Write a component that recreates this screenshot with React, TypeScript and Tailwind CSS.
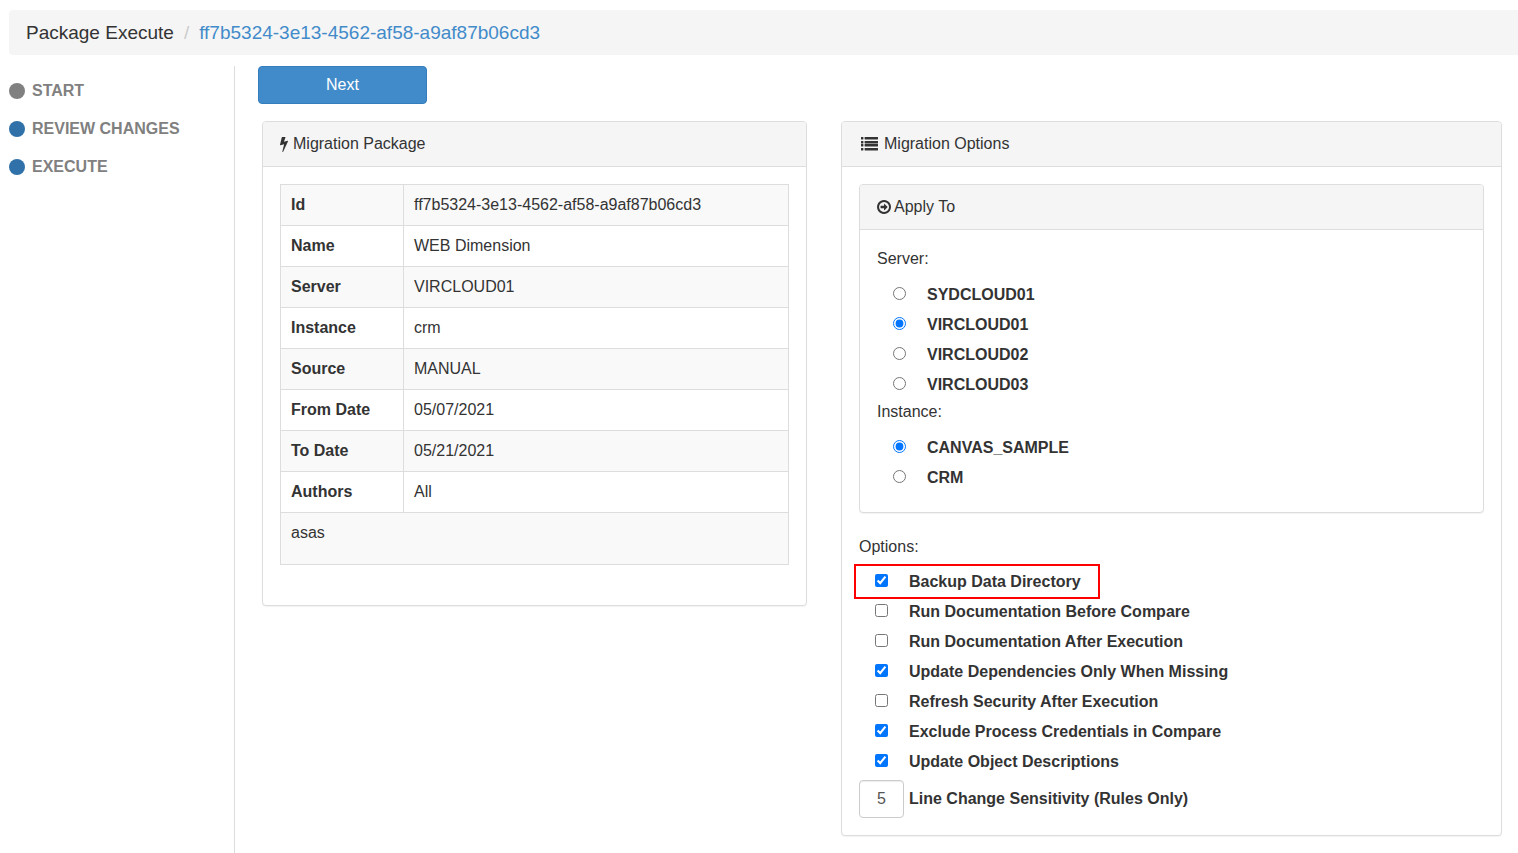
import { useState, type ReactNode } from "react";

const steps = [
  { label: "START", dot: "bg-[#808080]" },
  { label: "REVIEW CHANGES", dot: "bg-[#3071a9]" },
  { label: "EXECUTE", dot: "bg-[#3071a9]" },
];

const details = [
  ["Id", "ff7b5324-3e13-4562-af58-a9af87b06cd3"],
  ["Name", "WEB Dimension"],
  ["Server", "VIRCLOUD01"],
  ["Instance", "crm"],
  ["Source", "MANUAL"],
  ["From Date", "05/07/2021"],
  ["To Date", "05/21/2021"],
  ["Authors", "All"],
];

const servers = ["SYDCLOUD01", "VIRCLOUD01", "VIRCLOUD02", "VIRCLOUD03"];
const instances = ["CANVAS_SAMPLE", "CRM"];

const options = [
  { label: "Backup Data Directory", checked: true, highlighted: true },
  { label: "Run Documentation Before Compare", checked: false },
  { label: "Run Documentation After Execution", checked: false },
  { label: "Update Dependencies Only When Missing", checked: true },
  { label: "Refresh Security After Execution", checked: false },
  { label: "Exclude Process Credentials in Compare", checked: true },
  { label: "Update Object Descriptions", checked: true },
];

function BoltIcon() {
  return (
    <svg viewBox="448 128 898 1664" className="h-[15px] w-2 shrink-0" fill="currentColor" aria-hidden="true">
      <path d="M1333 566q18 20 7 44l-540 1157q-13 25-42 25-4 0-14-2-17-5-25.5-19t-4.5-30l197-808-406 101q-4 1-12 1-18 0-31-11-18-15-13-39l201-825q4-14 16-23t28-9h328q19 0 32 12.5t13 29.5q0 8-5 18l-171 463 396-98q8-2 12-2 19 0 34 15z" />
    </svg>
  );
}

function ListIcon() {
  return (
    <svg viewBox="0 0 17 14" className="h-[14px] w-[17px] shrink-0" fill="currentColor" aria-hidden="true">
      {[0, 4, 7, 11].map((y) => (
        <g key={y}>
          <rect x="0" y={y} width="2.4" height="2.4" rx="0.3" />
          <rect x="3.6" y={y} width="13.4" height="2.4" rx="0.3" />
        </g>
      ))}
    </svg>
  );
}

function ArrowCircleIcon() {
  return (
    <svg viewBox="128 128 1536 1536" className="size-[14px] shrink-0" fill="currentColor" aria-hidden="true">
      <path d="M1285 896q0 13-10 23l-320 320q-9 9-23 9-13 0-22.5-9.5t-9.5-22.5v-192h-352q-13 0-22.5-9.5t-9.5-22.5v-192q0-13 9.5-22.5t22.5-9.5h352v-192q0-14 9-23t23-9q12 0 24 10l319 319q9 9 9 23zm160 0q0-148-73-273t-198-198-273-73-273 73-198 198-73 273 73 273 198 198 273 73 273-73 198-198 73-273zm219 0q0 209-103 385.5t-279.5 279.5-385.5 103-385.5-103-279.5-279.5-103-385.5 103-385.5 279.5-279.5 385.5-103 385.5 103 279.5 279.5 103 385.5z" />
    </svg>
  );
}

function Panel({ heading, children }: { heading: ReactNode; children: ReactNode }) {
  return (
    <section className="rounded border border-[#ddd] bg-white shadow-[0_1px_1px_rgba(0,0,0,0.05)]">
      <h2 className="flex items-center rounded-t-[3px] border-b border-[#ddd] bg-[#f5f5f5] px-[17px] py-[11px]">
        {heading}
      </h2>
      {children}
    </section>
  );
}

function RadioGroup({ name, items, initial }: { name: string; items: string[]; initial: string }) {
  const [value, setValue] = useState(initial);
  return (
    <div className="mt-[9px] pl-4">
      {items.map((item) => (
        <label key={item} className="flex h-[30px] items-center gap-[21px] pt-[2px] font-bold">
          <input
            type="radio"
            name={name}
            checked={value === item}
            onChange={() => setValue(item)}
            className="mb-1 size-[13px]"
          />
          {item}
        </label>
      ))}
    </div>
  );
}

export default function App() {
  return (
    <div className="flex min-h-screen flex-col bg-white pl-[9px] pt-[10px] font-['Liberation_Sans',Arial,sans-serif] text-base leading-[22px] text-[#333]">
      <nav aria-label="Breadcrumb" className="flex h-[45px] items-center rounded-l bg-[#f5f5f5] px-[17px] text-[19px]">
        <span>Package Execute</span>
        <span className="px-[10px] text-[#ccc]">/</span>
        <a href="#package" className="text-[#428bca]">ff7b5324-3e13-4562-af58-a9af87b06cd3</a>
      </nav>

      <div className="mt-[11px] flex grow">
        <aside className="w-[226px] shrink-0 border-r border-[#ddd] pt-[14px]">
          <ol className="flex flex-col gap-4">
            {steps.map((step) => (
              <li key={step.label} className="flex items-center gap-[7px] font-bold text-[#808080]">
                <span className={`size-4 rounded-full ${step.dot}`} />
                {step.label}
              </li>
            ))}
          </ol>
        </aside>

        <main className="min-w-0 grow pb-[17px] pl-[23px] pr-4">
          <button type="button" className="h-[38px] w-[169px] rounded border border-[#357ebd] bg-[#428bca] text-white">
            Next
          </button>

          <div className="mt-[17px] grid grid-cols-[545fr_661fr] items-start gap-[34px] pl-1">
            <Panel heading={<><BoltIcon /><span className="pl-[5px]">Migration Package</span></>}>
              <div className="px-[17px] pb-10 pt-[17px]">
                <table className="w-full border-collapse border border-[#ddd] text-left">
                  <tbody>
                    {details.map(([name, value]) => (
                      <tr key={name} className="h-[41px] odd:bg-[#f9f9f9]">
                        <th scope="row" className="w-[123px] border border-[#ddd] px-[10px] pt-[9px] align-top font-bold">{name}</th>
                        <td className="border border-[#ddd] px-[10px] pt-[9px] align-top">{value}</td>
                      </tr>
                    ))}
                    <tr className="h-[52px] odd:bg-[#f9f9f9]">
                      <td colSpan={2} className="border border-[#ddd] px-[10px] pt-[9px] align-top">asas</td>
                    </tr>
                  </tbody>
                </table>
              </div>
            </Panel>

            <Panel heading={<><span className="pl-[2px]"><ListIcon /></span><span className="pl-[6px]">Migration Options</span></>}>
              <div className="p-[17px]">
                <Panel heading={<><ArrowCircleIcon /><span className="pl-[3px]">Apply To</span></>}>
                  <div className="px-[17px] pb-5 pt-[18px]">
                    <p>Server:</p>
                    <RadioGroup name="server" items={servers} initial="VIRCLOUD01" />
                    <p className="mt-[2px]">Instance:</p>
                    <RadioGroup name="instance" items={instances} initial="CANVAS_SAMPLE" />
                  </div>
                </Panel>

                <p className="mt-[23px]">Options:</p>
                <div className="mt-2 pl-4">
                  {options.map((option) => (
                    <div key={option.label} className="relative">
                      <label className="flex h-[30px] w-fit items-center gap-[21px] pt-[2px] font-bold">
                        <input type="checkbox" defaultChecked={option.checked} className="mb-1 size-[13px]" />
                        {option.label}
                      </label>
                      {option.highlighted && (
                        <span className="pointer-events-none absolute -left-[21px] -top-[2px] h-[35px] w-[246px] border-2 border-[#ff0000]" />
                      )}
                    </div>
                  ))}
                </div>
                <div className="mt-1 flex items-center gap-[5px] font-bold">
                  <input
                    id="sensitivity"
                    type="text"
                    defaultValue="5"
                    className="h-[38px] w-[45px] rounded border border-[#ccc] text-center font-normal text-[#555] shadow-[inset_0_1px_1px_rgba(0,0,0,0.075)]"
                  />
                  <label htmlFor="sensitivity">Line Change Sensitivity (Rules Only)</label>
                </div>
              </div>
            </Panel>
          </div>
        </main>
      </div>
    </div>
  );
}
